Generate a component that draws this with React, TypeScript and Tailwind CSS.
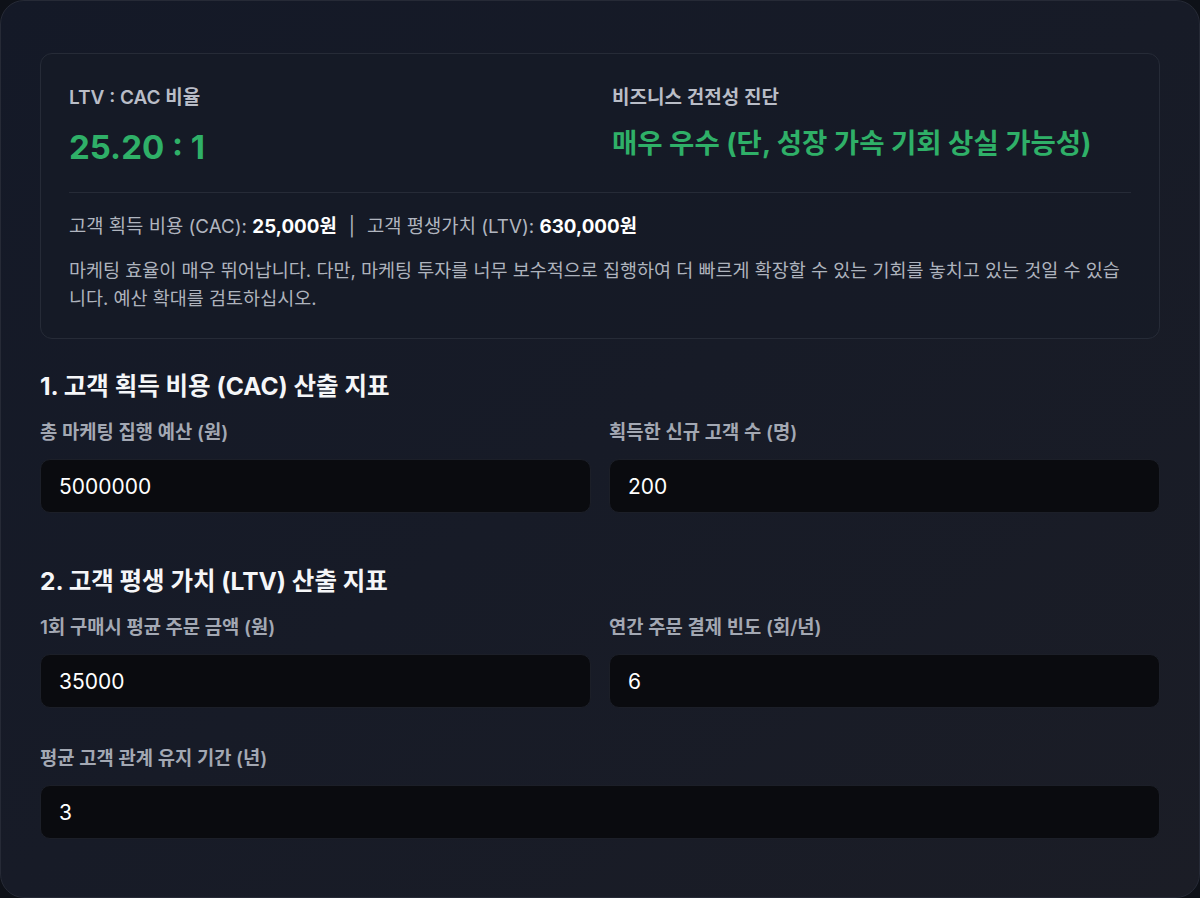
import React from 'react';

type Field = { label: string; value: string };

function NumberField({ label, value }: Field) {
  return (
    <label className="flex flex-col gap-[13px]">
      <span className="text-[18.75px] leading-[26px] font-semibold text-[#a3a8b3]">{label}</span>
      <input
        type="text"
        defaultValue={value}
        className="h-[54px] w-full rounded-[10px] border border-[#1c1f28] bg-[#0a0b0f] px-[18px] text-[21px] text-white outline-none"
      />
    </label>
  );
}

function Section({ title, children }: { title: string; children: React.ReactNode }) {
  return (
    <section>
      <h2 className="mb-[19px] text-[24.5px] leading-[30px] font-bold text-[#f5f6f8]">{title}</h2>
      <div className="grid grid-cols-2 gap-x-[18px] gap-y-[38px]">{children}</div>
    </section>
  );
}

export default function App() {
  const cac = 5000000 / 200;
  const ltv = 35000 * 6 * 3;
  const ratio = (ltv / cac).toFixed(2);

  return (
    <div className="min-h-[898px] w-full bg-[#0e1118] font-['Inter','Noto_Sans_CJK_KR',sans-serif]">
      <div className="h-[898px] rounded-[24px] border border-[#262a36] bg-gradient-to-br from-[#141927] via-[#171b27] to-[#1b1d26] px-[39px] pt-[52px]">
        {/* result summary */}
        <div className="rounded-[12px] border border-[#262b37] bg-[#151a27]/60 px-[28px] pt-[31px] pb-[26px]">
          <div className="grid grid-cols-2 gap-x-[24px]">
            <div>
              <div className="text-[19px] leading-[26px] font-semibold text-[#b9bdc7]">LTV : CAC 비율</div>
              <div className="mt-[16px] text-[33px] leading-[40px] font-bold text-[#2fb068]">{ratio} : 1</div>
            </div>
            <div>
              <div className="text-[19px] leading-[26px] font-semibold text-[#b9bdc7]">비즈니스 건전성 진단</div>
              <div className="mt-[15px] text-[27.5px] leading-[34px] font-bold text-[#2fb068]">
                매우 우수 (단, 성장 가속 기회 상실 가능성)
              </div>
            </div>
          </div>
          <div className="mt-[25px] border-t border-[#262b37]" />
          <p className="mt-[21px] text-[18.8px] leading-[26px] text-[#b0b5bf]">
            고객 획득 비용 (CAC): <b className="font-bold text-white">{cac.toLocaleString()}원</b>
            <span className="mx-[12px]">|</span>
            고객 평생가치 (LTV): <b className="font-bold text-white">{ltv.toLocaleString()}원</b>
          </p>
          <p className="mt-[16px] break-all text-[18.5px] leading-[28px] text-[#aeb3bd]">
            마케팅 효율이 매우 뛰어납니다. 다만, 마케팅 투자를 너무 보수적으로 집행하여 더 빠르게 확장할 수 있는 기회를 놓치고 있는 것일 수 있습니다. 예산 확대를 검토하십시오.
          </p>
        </div>

        <div className="mt-[32px] flex flex-col gap-[53px]">
          <Section title="1. 고객 획득 비용 (CAC) 산출 지표">
            <NumberField label="총 마케팅 집행 예산 (원)" value="5000000" />
            <NumberField label="획득한 신규 고객 수 (명)" value="200" />
          </Section>
          <Section title="2. 고객 평생 가치 (LTV) 산출 지표">
            <NumberField label="1회 구매시 평균 주문 금액 (원)" value="35000" />
            <NumberField label="연간 주문 결제 빈도 (회/년)" value="6" />
            <div className="col-span-2">
              <NumberField label="평균 고객 관계 유지 기간 (년)" value="3" />
            </div>
          </Section>
        </div>
      </div>
    </div>
  );
}
